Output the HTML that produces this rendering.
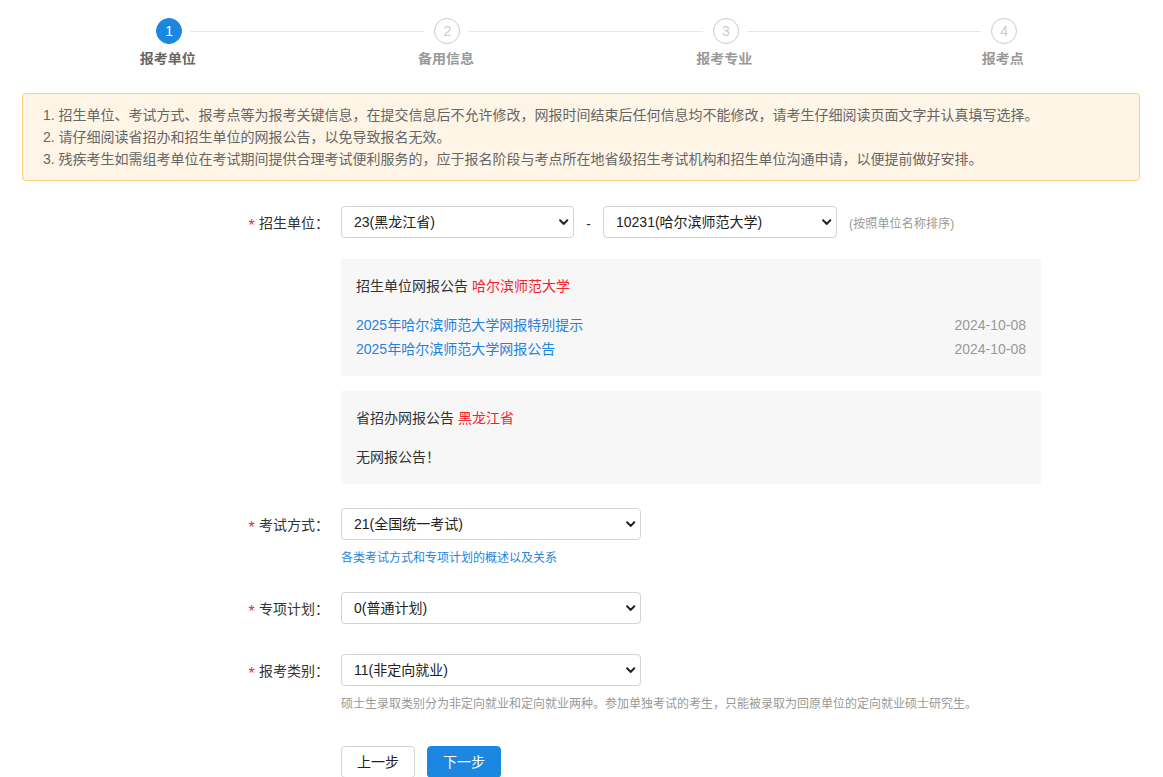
<!DOCTYPE html>
<html lang="zh-CN">
<head>
<meta charset="utf-8">
<title>网上报名 - 报考单位</title>
<style>
*{box-sizing:border-box;}
html,body{margin:0;padding:0;background:#fff;}
body{width:1163px;height:777px;overflow:hidden;position:relative;
  font-family:"Liberation Sans","Noto Sans CJK SC",sans-serif;font-size:14px;line-height:22px;color:#333;}
a{text-decoration:none;color:#2d8cf0;}

/* ---------- steps ---------- */
.steps{position:absolute;left:30px;top:0;width:1113.33px;height:80px;}
.step{position:absolute;top:0;width:25%;height:80px;text-align:center;}
.step.s1{left:0;}.step.s2{left:25%;}.step.s3{left:50%;}.step.s4{left:75%;}
.step .num{position:absolute;left:50%;top:18px;margin-left:-13px;width:26px;height:26px;border-radius:50%;
  border:1px solid #ccc;color:#ccc;font-size:14px;line-height:24px;text-align:center;background:#fff;}
.step.on .num{background:#1b87e0;border-color:#1b87e0;color:#fff;}
.step .tt{position:absolute;left:-3px;right:0;top:47px;height:22px;line-height:22px;font-size:14px;font-weight:bold;color:#999;transform:scaleY(.93);}
.step.on .tt{color:#666;}
.tail{position:absolute;top:31px;height:1px;background:#e4e7ed;}

/* ---------- alert ---------- */
.alert{position:absolute;left:22px;top:93px;width:1118px;height:88px;border:1px solid #ffcc80;background:#fff5e6;
  border-radius:4px;padding:10px 20px;color:#666;font-size:14px;line-height:22px;}
.alert p{margin:0;height:22px;white-space:nowrap;}

/* ---------- form ---------- */
.form{position:absolute;left:0;top:206px;width:1163px;}
.item{position:relative;padding-left:341px;margin-bottom:24px;}
.item .lab{position:absolute;left:221px;top:0;width:120px;height:32px;line-height:34px;text-align:right;padding-right:12px;color:#333;white-space:nowrap;}
.item .lab i{font-style:normal;color:#f5222d;display:inline-block;width:7px;margin-right:4px;font-size:16px;line-height:16px;position:relative;top:3px;left:0;text-align:center;}
.ctl{width:700px;}
.row{height:38px;white-space:nowrap;position:relative;}
.sel{display:inline-block;vertical-align:top;position:relative;height:32px;}
.sel.w3{width:233px;}
.sel.w3b{width:234px;}
.sel.w300{width:300px;}
.sel select{display:block;width:100%;height:32px;border:1px solid #d0d3d9;border-radius:4px;background:#fff;
  font-family:"Liberation Sans","Noto Sans CJK SC",sans-serif;font-size:14px;color:#222;line-height:30px;padding:0 24px 0 12px;margin:0;
  -webkit-appearance:none;appearance:none;outline:none;}
.sel svg{position:absolute;right:5.5px;top:12.8px;width:9.4px;height:6.6px;pointer-events:none;}
.dash{display:inline-block;vertical-align:top;width:29px;height:32px;line-height:36px;text-align:center;color:#333;}
.note{display:inline-block;vertical-align:top;height:32px;line-height:35px;margin-left:12px;font-size:12px;color:#999;letter-spacing:.15px;transform:translateY(.6px);}
.box{background:#f7f7f7;padding:15px;width:700px;line-height:24px;}
.box + .box{margin-top:15px;}
.box h4{margin:0 0 15px 0;font-size:14px;font-weight:normal;height:24px;line-height:24px;color:#333;}
.box h4 span{color:#f5222d;}
.box ul{list-style:none;margin:0;padding:0;}
.box li{height:24px;line-height:24px;position:relative;}
.box li a{color:#1e84de;}
.box li em{font-style:normal;position:absolute;right:0;top:0;color:#999;}
.box p{margin:0;height:24px;line-height:24px;color:#333;}
.hint{height:22px;line-height:25px;font-size:12px;color:#999;white-space:nowrap;}
.hint a{color:#1e84de;}
.btns{padding-left:341px;margin-top:32px;white-space:nowrap;font-size:0;}
.btn{display:inline-block;vertical-align:top;height:32px;line-height:30px;padding:0 15px;border:1px solid #d0d3d9;border-radius:4px;
  font-family:"Liberation Sans","Noto Sans CJK SC",sans-serif;font-size:14px;color:#222;background:#fff;margin:0 12px 0 0;cursor:pointer;}
.btn.pri{background:#1b87e0;border-color:#1b87e0;color:#fff;}
</style>
</head>
<body>

<div class="steps">
  <div class="step s1 on"><div class="num">1</div><div class="tt">报考单位</div></div>
  <div class="step s2"><div class="num">2</div><div class="tt">备用信息</div></div>
  <div class="step s3"><div class="num">3</div><div class="tt">报考专业</div></div>
  <div class="step s4"><div class="num">4</div><div class="tt">报考点</div></div>
  <div class="tail" style="left:160px;width:234px;"></div>
  <div class="tail" style="left:438px;width:235px;"></div>
  <div class="tail" style="left:717px;width:234px;"></div>
</div>

<div class="alert">
  <p>1. 招生单位、考试方式、报考点等为报考关键信息，在提交信息后不允许修改，网报时间结束后任何信息均不能修改，请考生仔细阅读页面文字并认真填写选择。</p>
  <p>2. 请仔细阅读省招办和招生单位的网报公告，以免导致报名无效。</p>
  <p>3. 残疾考生如需组考单位在考试期间提供合理考试便利服务的，应于报名阶段与考点所在地省级招生考试机构和招生单位沟通申请，以便提前做好安排。</p>
</div>

<form class="form" onsubmit="return false">
  <div class="item">
    <label class="lab"><i>*</i>招生单位：</label>
    <div class="ctl">
      <div class="row"><span class="sel w3"><select><option>23(黑龙江省)</option></select><svg viewBox="0 0 9.4 6.6"><path d="M1.1 1.2 L4.7 4.9 L8.3 1.2" fill="none" stroke="#222" stroke-width="2" stroke-linecap="round" stroke-linejoin="miter"/></svg></span><span class="dash">-</span><span class="sel w3b"><select><option>10231(哈尔滨师范大学)</option></select><svg viewBox="0 0 9.4 6.6"><path d="M1.1 1.2 L4.7 4.9 L8.3 1.2" fill="none" stroke="#222" stroke-width="2" stroke-linecap="round" stroke-linejoin="miter"/></svg></span><span class="note">(按照单位名称排序)</span></div>
      <div class="box" style="margin-top:15px;">
        <h4>招生单位网报公告 <span>哈尔滨师范大学</span></h4>
        <ul>
          <li><a href="#">2025年哈尔滨师范大学网报特别提示</a><em>2024-10-08</em></li>
          <li><a href="#">2025年哈尔滨师范大学网报公告</a><em>2024-10-08</em></li>
        </ul>
      </div>
      <div class="box">
        <h4>省招办网报公告 <span>黑龙江省</span></h4>
        <p>无网报公告！</p>
      </div>
    </div>
  </div>

  <div class="item">
    <label class="lab"><i>*</i>考试方式：</label>
    <div class="ctl">
      <div class="row"><span class="sel w300"><select><option>21(全国统一考试)</option></select><svg viewBox="0 0 9.4 6.6"><path d="M1.1 1.2 L4.7 4.9 L8.3 1.2" fill="none" stroke="#222" stroke-width="2" stroke-linecap="round" stroke-linejoin="miter"/></svg></span></div>
      <div class="hint"><a href="#">各类考试方式和专项计划的概述以及关系</a></div>
    </div>
  </div>

  <div class="item">
    <label class="lab"><i>*</i>专项计划：</label>
    <div class="ctl">
      <div class="row"><span class="sel w300"><select><option>0(普通计划)</option></select><svg viewBox="0 0 9.4 6.6"><path d="M1.1 1.2 L4.7 4.9 L8.3 1.2" fill="none" stroke="#222" stroke-width="2" stroke-linecap="round" stroke-linejoin="miter"/></svg></span></div>
    </div>
  </div>

  <div class="item">
    <label class="lab"><i>*</i>报考类别：</label>
    <div class="ctl">
      <div class="row"><span class="sel w300"><select><option>11(非定向就业)</option></select><svg viewBox="0 0 9.4 6.6"><path d="M1.1 1.2 L4.7 4.9 L8.3 1.2" fill="none" stroke="#222" stroke-width="2" stroke-linecap="round" stroke-linejoin="miter"/></svg></span></div>
      <div class="hint">硕士生录取类别分为非定向就业和定向就业两种。参加单独考试的考生，只能被录取为回原单位的定向就业硕士研究生。</div>
    </div>
  </div>

  <div class="btns"><button type="button" class="btn">上一步</button><button type="button" class="btn pri">下一步</button></div>
</form>

</body>
</html>
